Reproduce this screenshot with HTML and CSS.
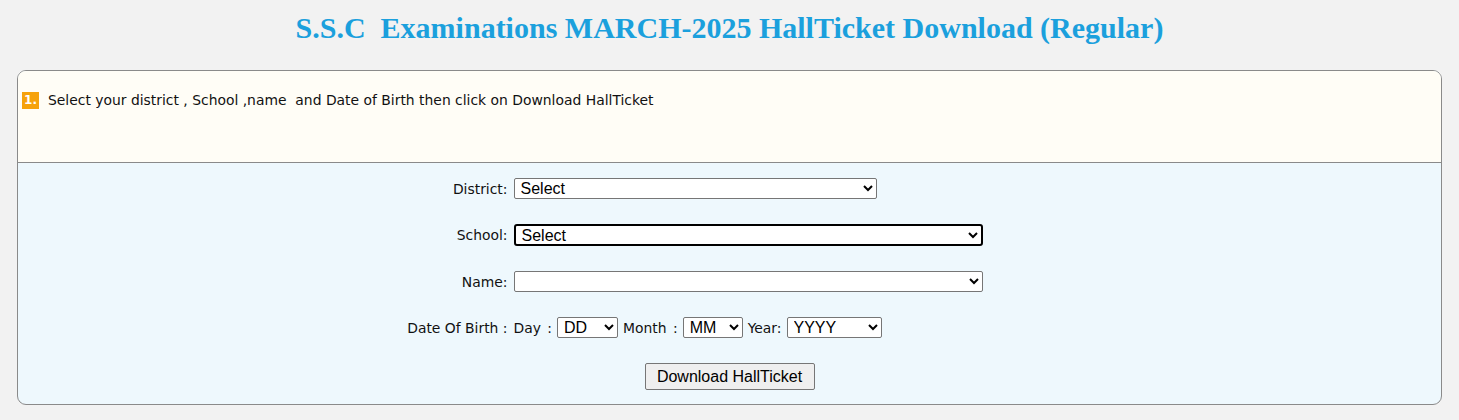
FILE: index.html
```html
<!DOCTYPE html>
<html>
<head>
<meta charset="utf-8">
<link rel="stylesheet" href="styles.css">
</head>
<body>
<h1 class="title">S.S.C&nbsp; Examinations MARCH-2025 HallTicket Download (Regular)</h1>
<div class="panel">
  <div class="panel-head">
    <span class="badge">1.</span>
    <span class="instr">Select your district , School ,name&nbsp; and Date of Birth then click on Download HallTicket</span>
  </div>
  <div class="panel-body">
    <div class="form">
      <label class="lbl">District:</label>
      <div class="ctl"><select class="sel sel-district"><option>Select</option></select></div>

      <label class="lbl">School:</label>
      <div class="ctl"><select class="sel sel-wide focused"><option>Select</option></select></div>

      <label class="lbl">Name:</label>
      <div class="ctl"><select class="sel sel-wide"><option></option></select></div>

      <label class="lbl">Date Of Birth :</label>
      <div class="ctl dob">
        <span class="lbl-in">Day :</span>
        <select class="sel sel-dd"><option>DD</option></select>
        <span class="lbl-in">Month :</span>
        <select class="sel sel-mm"><option>MM</option></select>
        <span class="lbl-in">Year:</span>
        <select class="sel sel-yy"><option>YYYY</option></select>
      </div>
    </div>
    <div class="actions">
      <button class="btn" type="button">Download HallTicket</button>
    </div>
  </div>
</div>
</body>
</html>
```

FILE: styles.css
```css
html, body {
  margin: 0;
  padding: 0;
}
body {
  background: #f2f2f2;
  font-family: "DejaVu Sans", Verdana, sans-serif;
  width: 1459px;
  height: 420px;
  overflow: hidden;
}
.title {
  margin: 0;
  padding-top: 10px;
  height: 58px;
  box-sizing: border-box;
  text-align: center;
  font-family: "Liberation Serif", "Times New Roman", serif;
  font-weight: bold;
  font-size: 30px;
  line-height: 36px;
  color: #1ba0dd;
}
.panel {
  margin: 12px 17px 0 17px;
  border: 1px solid #8a8a8a;
  border-radius: 9px;
  overflow: hidden;
  background: #eef8fd;
}
.panel-head {
  background: #fffdf6;
  height: 92px;
  border-bottom: 1px solid #8a8a8a;
  box-sizing: border-box;
  padding: 21px 0 0 4px;
  display: flex;
  align-items: flex-start;
}
.badge {
  display: inline-block;
  width: 17px;
  height: 17px;
  background: #f6a20b;
  color: #fff;
  font-weight: bold;
  font-size: 12px;
  line-height: 17px;
  text-align: center;
  margin-right: 9px;
}
.instr {
  font-size: 13.9px;
  line-height: 17px;
  color: #111;
}
.panel-body {
  padding: 15px 0 14px 0;
}
.form {
  width: 648px;
  margin: 0 auto;
  display: grid;
  grid-template-columns: 102px 540px;
  column-gap: 6px;
  row-gap: 25px;
  align-items: center;
}
.lbl, .lbl-in {
  font-size: 13.9px;
  color: #111;
  white-space: nowrap;
}
.lbl {
  text-align: right;
}
.lbl-in {
  word-spacing: 2px;
}
.ctl {
  display: flex;
  align-items: center;
}
.dob {
  gap: 5px;
}
.sel {
  font-family: "Liberation Sans", Arial, sans-serif;
  font-size: 16px;
  height: 21px;
  border: 1px solid #767676;
  border-radius: 2px;
  background: #fff;
  color: #000;
  padding: 0 2px;
  box-sizing: border-box;
}
.sel-district { width: 363px; }
.sel-wide { width: 469px; }
.sel-dd { width: 61px; }
.sel-mm { width: 60px; }
.sel-yy { width: 95px; }
.focused {
  border: 2px solid #000;
  border-radius: 3px;
  height: 22px;
}
.actions {
  display: flex;
  justify-content: center;
  margin-top: 25px;
}
.btn {
  font-family: "Liberation Sans", Arial, sans-serif;
  font-size: 16px;
  height: 27px;
  width: 170px;
  padding: 0 6px;
  background: #efefef;
  border: 1px solid #767676;
  border-radius: 2px;
  color: #000;
}
```
